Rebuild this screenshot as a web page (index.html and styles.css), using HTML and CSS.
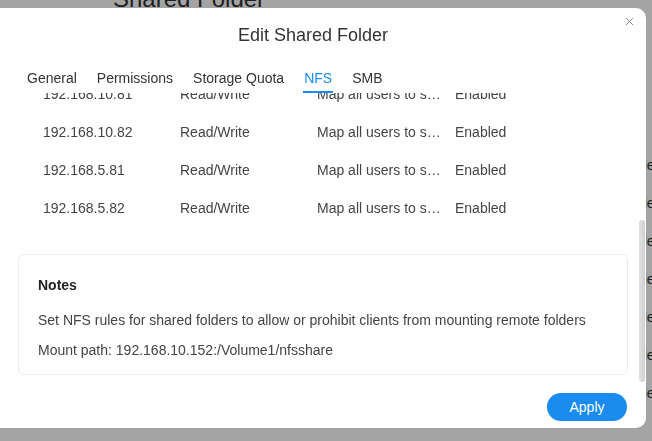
FILE: index.html
```html
<!DOCTYPE html>
<html lang="en">
<head>
  <meta charset="UTF-8" />
  <meta name="viewport" content="width=device-width, initial-scale=1.0"/>
  <title>Edit Shared Folder</title>
  <link rel="stylesheet" href="styles.css">
</head>
<body>
  <!-- Page behind the dialog -->
  <div class="page">
    <h1 class="page-title">Shared Folder</h1>
    <div class="page-list">
      <div class="page-row">Enabled</div>
      <div class="page-row">Enabled</div>
      <div class="page-row">Enabled</div>
      <div class="page-row">Enabled</div>
      <div class="page-row">Enabled</div>
      <div class="page-row">Enabled</div>
      <div class="page-row">Enabled</div>
    </div>
  </div>
  <div class="overlay"></div>

  <!-- Edit dialog -->
  <div class="dialog">
    <button class="dialog-close" title="Close">
      <svg width="7" height="7" viewBox="0 0 7 7"><path d="M0 0L7 7M7 0L0 7" stroke="#8a8a8a" stroke-width="1"/></svg>
    </button>
    <h2 class="dialog-title">Edit Shared Folder</h2>

    <nav class="tabs">
      <span class="tab">General</span>
      <span class="tab">Permissions</span>
      <span class="tab">Storage Quota</span>
      <span class="tab active">NFS</span>
      <span class="tab">SMB</span>
    </nav>

    <div class="dialog-body" id="dialogBody">
      <div class="rules">
        <div class="rule"><span>192.168.1.10</span><span>Read Only</span><span class="squash">No mapping</span><span>Enabled</span></div>
        <div class="rule"><span>192.168.1.11</span><span>Read Only</span><span class="squash">No mapping</span><span>Enabled</span></div>
        <div class="rule"><span>192.168.3.20</span><span>Read/Write</span><span class="squash">Map root to admin</span><span>Disabled</span></div>
        <div class="rule"><span>192.168.3.21</span><span>Read/Write</span><span class="squash">Map root to admin</span><span>Disabled</span></div>
        <div class="rule"><span>192.168.10.60</span><span>Read/Write</span><span class="squash">Map all users to superuser</span><span>Enabled</span></div>
        <div class="rule"><span>192.168.10.61</span><span>Read/Write</span><span class="squash">Map all users to superuser</span><span>Enabled</span></div>
        <div class="rule"><span>192.168.10.81</span><span>Read/Write</span><span class="squash">Map all users to superuser</span><span>Enabled</span></div>
        <div class="rule"><span>192.168.10.82</span><span>Read/Write</span><span class="squash">Map all users to superuser</span><span>Enabled</span></div>
        <div class="rule"><span>192.168.5.81</span><span>Read/Write</span><span class="squash">Map all users to superuser</span><span>Enabled</span></div>
        <div class="rule"><span>192.168.5.82</span><span>Read/Write</span><span class="squash">Map all users to superuser</span><span>Enabled</span></div>
      </div>

      <div class="notes">
        <h3>Notes</h3>
        <p>Set NFS rules for shared folders to allow or prohibit clients from mounting remote folders</p>
        <p>Mount path: 192.168.10.152:/Volume1/nfsshare</p>
      </div>
    </div>
    <!-- scroll thumb (body is scrolled to the bottom) -->
    <div class="scroll-thumb"></div>

    <div class="dialog-footer">
      <button class="btn-apply">Apply</button>
    </div>
  </div>

  <script>
    // keep the notes in view
    document.getElementById('dialogBody').scrollTop = 9999;
  </script>
</body>
</html>
```

FILE: styles.css
```css
/* Global */
body {
  margin: 0;
  height: 100vh;
  overflow: hidden;
  font-family: "Liberation Sans", Arial, sans-serif;
  background: #fff;
}

/* Page behind the dialog */
.page {
  color: #333;
}

.page-title {
  margin: -15px 0 0 113px;
  font-size: 24px;
  line-height: 28px;
  font-weight: normal;
}

.page-list {
  margin-top: 133px;
}

.page-row {
  height: 38px;
  line-height: 38px;
  padding-left: 611px;
  font-size: 14px;
}

.overlay {
  position: fixed;
  inset: 0;
  background: rgba(0, 0, 0, 0.355);
}

/* Dialog */
.dialog {
  position: absolute;
  left: -20px;
  top: 8px;
  width: 666px;
  height: 420px;
  display: flex;
  flex-direction: column;
  background: #fff;
  border-radius: 10px;
  overflow: hidden;
}

.dialog-close {
  position: absolute;
  top: 10px;
  right: 13px;
  width: 7px;
  height: 7px;
  padding: 0;
  border: none;
  background: none;
  line-height: 0;
  cursor: pointer;
}

.dialog-title {
  margin: 15px 0 0;
  text-align: center;
  font-size: 18px;
  line-height: 24px;
  font-weight: normal;
  color: #333;
}

/* Tabs */
.tabs {
  display: flex;
  gap: 18px;
  margin: 21px 0 0 46px;
}

.tab {
  padding: 0 1px 3px;
  font-size: 14px;
  line-height: 20px;
  color: #333;
  border-bottom: 2px solid transparent;
  cursor: pointer;
}

.tab.active {
  color: #1a8cf0;
  border-color: #1a8cf0;
}

/* Scrolling body */
.dialog-body {
  flex: 1;
  overflow-y: auto;
  scrollbar-width: none;
  padding: 0 18px 11px 38px;
}

.dialog-body::-webkit-scrollbar {
  display: none;
}

.scroll-thumb {
  position: absolute;
  right: 1px;
  top: 212px;
  width: 6px;
  height: 162px;
  border-radius: 3px;
  background: linear-gradient(to right, #e2e2e2, #cfcfcf);
}

.rule {
  display: grid;
  grid-template-columns: 137px 137px 138px auto;
  height: 38px;
  line-height: 38px;
  padding-left: 25px;
  font-size: 14px;
  color: #444;
}

.squash {
  padding-right: 10px;
  white-space: nowrap;
  overflow: hidden;
  text-overflow: ellipsis;
}

/* Notes */
.notes {
  margin-top: 27px;
  padding: 20px 19px 14px;
  border: 1px solid #ebebeb;
  border-radius: 6px;
  font-size: 14px;
  line-height: 20px;
  color: #444;
}

.notes h3 {
  margin: 0 0 15px;
  font-size: 14px;
  line-height: 20px;
  font-weight: bold;
  color: #222;
}

.notes p {
  margin: 0;
}

.notes p + p {
  margin-top: 10px;
}

/* Footer */
.dialog-footer {
  display: flex;
  justify-content: flex-end;
  padding: 7px 19px;
}

.btn-apply {
  width: 80px;
  height: 28px;
  border: none;
  border-radius: 14px;
  background: #1a8cf0;
  color: #fff;
  font-family: "Liberation Sans", Arial, sans-serif;
  font-size: 14px;
  cursor: pointer;
}
```
